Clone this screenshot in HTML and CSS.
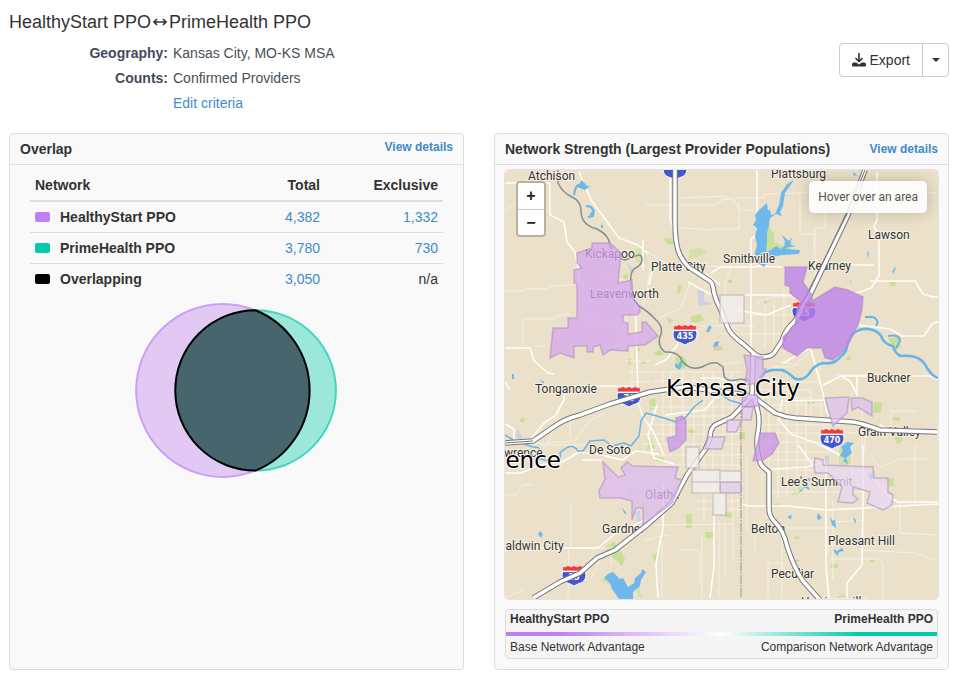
FILE: index.html
```html
<!DOCTYPE html>
<html lang="en">
<head>
<meta charset="utf-8">
<title>Network comparison</title>
<link rel="stylesheet" href="styles.css">
</head>
<body>
<main class="page">
  <header class="top">
    <div class="summary">
      <h1 class="title">HealthyStart PPO<svg class="arrow" viewBox="0 0 16 10" role="img" aria-label="compared with"><path d="M3 5h10M5 2L2 5l3 3M11 2l3 3-3 3" fill="none" stroke="#333" stroke-width="1.700"/></svg>PrimeHealth PPO</h1>
      <dl class="criteria">
        <dt>Geography:</dt><dd>Kansas City, MO-KS MSA</dd>
        <dt>Counts:</dt><dd>Confirmed Providers</dd>
        <dd class="edit"><a href="#">Edit criteria</a></dd>
      </dl>
    </div>
    <div class="export">
      <button type="button" class="btn btn-main"><svg class="dl" viewBox="0 0 14 14" aria-hidden="true"><path d="M7 0v8M3.500 5L7 8.500 10.500 5" fill="none" stroke="#333" stroke-width="1.600"/><path d="M1.500 9.500h2.700L7 11.500 9.800 9.500h2.700L14 10.800v1.700q0 1-1 1H1q-1 0-1-1v-1.700z" fill="#333"/></svg>Export</button>
      <button type="button" class="btn btn-caret" aria-label="More export options"><span class="caret"></span></button>
    </div>
  </header>

  <div class="cards">
    <section class="card">
      <div class="card-head"><h2>Overlap</h2><a class="details details-high" href="#">View details</a></div>
      <div class="overlap-body">
        <table class="networks">
          <thead><tr><th>Network</th><th class="num">Total</th><th class="num excl">Exclusive</th></tr></thead>
          <tbody>
            <tr><th><span class="swatch purple"></span>HealthyStart PPO</th><td class="num"><a href="#">4,382</a></td><td class="num"><a href="#">1,332</a></td></tr>
            <tr><th><span class="swatch teal"></span>PrimeHealth PPO</th><td class="num"><a href="#">3,780</a></td><td class="num"><a href="#">730</a></td></tr>
            <tr><th><span class="swatch black"></span>Overlapping</th><td class="num"><a href="#">3,050</a></td><td class="num">n/a</td></tr>
          </tbody>
        </table>
        <svg class="venn" viewBox="135 302 204 177" role="img" aria-label="Network overlap">
          <circle cx="222.700" cy="390.400" r="86.500" fill="#e2c9f4" stroke="#cc9ff3" stroke-width="2"/>
          <circle cx="255.700" cy="390.400" r="80.200" fill="#9be8da" stroke="#45d6bf" stroke-width="2"/>
          <path d="M255.500 310.200A80.200 80.200 0 0 0 255.500 470.600A86.500 86.500 0 0 0 255.500 310.200Z" fill="#47656c" stroke="#000" stroke-width="2"/>
        </svg>
      </div>
    </section>

    <section class="card">
      <div class="card-head"><h2>Network Strength (Largest Provider Populations)</h2><a class="details" href="#">View details</a></div>
      <div class="map-body">
        <div class="map">
          <svg class="map-art" viewBox="505 170 433 429" role="img" aria-label="Map of the Kansas City area">
            <defs>
              <g id="shield">
                <path d="M-11.500-3.500Q-13.500 4-8 7.500Q-3 9 0 11Q3 9 8 7.500Q13.500 4 11.500-3.500Z" fill="#4257cb" stroke="#fff" stroke-width="1"/>
                <path d="M-11-9l2 1 3-1.500 3 1.500 3-1.500 3 1.500 3-1.500 3 1.500 2-1 .5 5H-11.500z" fill="#ef3b3b" stroke="#fff" stroke-width=".6"/>
                <path d="M-12-3.500H12" stroke="#fff" stroke-width="1.200"/>
              </g>
            </defs>
            <rect x="505" y="170" width="433" height="429" fill="#ebe1ca"/>

            <g fill="#c6df94">
              <path d="M761 230l8-4 5 8v8l9 4 3-5 7 2-3 7-14 6-8 1-8-6z" opacity=".9"/>
              <path d="M636 249l10-2v12l-8 4-5-7zM690 250l10-3 8 5-10 5-10 3z" opacity=".6"/>
              <path d="M692 316l8-2 4 6-8 3-6-2zM675 358l8-2 4 6-2 7-8-3zM874 402l8 1-1 9-8 1zM606 546l8-4 6 8 5 8-3 8-6-6-9-6zM652 555l5-2 2 5-5 3z"/>
              <path d="M628 359h5v6h-5zM641 360h5v4h-5zM637 348h3v3h-3zM686 514h6v14h-6zM705 532h8v6h-8zM831 564h7v4h-7zM885 478h9v8l-5 1zM649 400l6-2 1 8-6 5zM739 432h6v7h-6zM894 437l8-1 1 5-6 3zM893 417h7v4h-7z" opacity=".9"/>
              <path d="M613 572l-5 5-8 3 10 5zM645 570l-8 12 1 14 4 2-4-13zM839 445l10 2 3 14-11 12-4-14zM805 480l-9 8-5 8 7-2zM836 598l5-4 6 2 3 2z" opacity=".7"/>
              <path d="M889 282l6-1 1 4-5 1zM520 419l5-1-1 4h-4zM807 400l6-1 2 4-7 2zM846 358l4-2 1 4-4 1zM791 386l8-2v4l-7 1zM654 352l7-2 3 4-6 2zM678 284l4 3-3 7-2-1zM664 238l9 1 3 6-9-1zM623 275l5-1v5h-4zM719 394l8-1-2 5-6 1zM648 440l7 3-1 5-7 2zM688 430l7-1 1 5-6 2zM774 504l5-1-1 3h-4zM794 537l5-1v3h-4zM870 560l5-1v3h-5zM725 512l8 1-2 5-6-1zM656 457l8 1-1 4-7-1zM888 338l11-1 2 10-6 4z"/>
            </g>
            <g fill="#d9cdab"><path d="M713 345l8 1 2 4-9 1zM667 318l7 2-5 3zM728 280h4v3h-4zM795 560h4v2h-4zM764 300l4 2-4 3z"/></g>
            <g fill="#ccd2e4"><path d="M697 291l7-2v12l9 3-14 2zM635 512l5-1 1 12-3 3zM626 262l8 8 1 4-4-1zM515 436l3-7 4 8-2 4zM849 280l3 1-1 6zM825 455l4 1v7l-4 1zM628 488l6 1-1 5-5-1z"/></g>

            <g class="roads minor">
              <path d="M505 291h18l3-2h21l3-3 24-1M523 346v-27h31l2-3 15-2M505 210l17-10M598 274l30 7M615 292l3 55M535 346l10 0M671 205h45l8-7h41v-4l34-1h137M671 227l40 3 6-1 22 0v-27M682 198l42-2M721 200l12-1 7 11h15M645 205h26M684 267l48-1M732 266l-7 15v22M756 303l15-6h22l14 8M825 192v36h-10v52M800 190v44l14 0v18M831 304v25M846 305l-18 29M645 250l20 13 23 3M650 266l-3 25-4 15M690 282l-9 26-22 10M560 408l-5 20-10 20M505 495h12l5-10h10M570 418v20M605 413l-16 8-14 20-44 3M540 445h45M571 505v43M569 550l-1 48M571 548h50M662 540v58M702 535v63M738 448v70M747 455v75M755 520v30M733 506v55M725 523v55M719 520v75M838 440v30M852 445v40M862 404v50M891 414v22M938 410v30M916 411h-26M821 402v20M811 390v35"/>
              <path d="M833 500v80M870 455l10 12 20-8h30M830 559h50l3 6v37M776 528h58M782 533v45M766 470h55M771 492h95M900 503v30l37 2M860 550l55 3 22 8M828 543v12M915 445v55M782 598v-35M782 563h-14v35M865 520l-30 2M680 550h20v35M654 525l80-1M645 540l24-5M611 565v-20M592 577l10-20M505 550h30M505 598l18-8"/>
              <path d="M651 372h90M653 381h88M650 391h30M650 407h92M656 416h86M650 425h90M640 434h100M642 444h98M650 455h90M655 465h85M695 475h45M695 484h50M697 493h50M697 501h50M697 509h46M663 372v70M671 372v85M683 372v90M694 372v92M704 372v150M713 372v137M723 372v137M732 372v140M762 398v110M769 398v70M778 398v100M787 398v100M797 398v95M806 398v95M760 390h50M760 398h52M760 405h65M760 425h80M760 433h75M760 442h75M762 452h70M760 460h60M760 382h60M774 300v48M784 290v65M700 326h55M720 334h75M765 303v45M750 315h40M715 365l25-3M710 320l30 10"/>
              <path d="M592 290v55M605 285l20 25 5 31M583 327h46M585 315l20-5M632 340v50M625 361h25M627 372h23M628 382h22M810 352l-18 15h-20M820 360l-1 25M834 375h35M855 390l-12 12-15 10M821 425l17 8h27M865 427v26M780 362l20 3"/>
            </g>
            <g class="roads">
              <path d="M505 183h45M550 183v32l14 7 3 20 8 10 4 20-1 13M579 172l12 28 28 38 19 7 10 9M505 348h25l4 13 14 12 6 1M505 382l5 8M565 386l-1 14-9 16-10 6-15 18M564 386h70M635 295l2 65 1 42 5 15 10 14 11 24M653 267l-4 18M505 424l9 5v15M757 170v64l-6 5v145M670 170v50l6 12M643 240v30M688 282l26 14M720 285l-15-12M711 273l9-6h38M757 266l25 1M744 295h50M877 172v48l-3 6 5 10v40l-8 12-20 7-8 5M820 264h18l22 1h14M870 281l45 0 8 13 10 3h8M736 310l30 5 25-10"/>
              <path d="M858 325l32 4 12 7h22l8-12 7-3M811 350l12 43 4 20 9 8M783 363l29-16M823 385l18-9h90l7 4M841 376l9 5 8 15M857 376v20M825 400l-40 1M880 425l20 10M505 473h16l19-8 22-3 17-10 19 2 24 6 14-9 23 3M505 548h93l17-14 32-15M602 460l-20 0M660 540l-4 25 2 33M714 515v52l-4 31M663 484v44l-3 15M657 405l-9 30 6 23 20 6M655 365l12-6 11-15M700 378l18 0 18 5M735 395l-20 3-10 12-40 5M782 400l-3 20 12 14 25 9 24 12M825 462l-18 5-36 2M741 504l7 2h40l38 4 112-6M826 464v103l3 31M863 445v60l-1 60-15 18v15M874 478l14 18 10 6h40M798 445l15 20"/>
            </g>

            <g fill="none" stroke="#67b4e8" stroke-width="2" stroke-linejoin="round">
              <path stroke-width="2.600" d="M760 378q2-6 12-8h10q6 2 12 8 8 4 15-4 5-9 14-11 12 2 18-7 6-4 6-10 3-10 8-14 8-5 18-2 8 3 10 10 4 5 10 6 2 8 8 10 20-2 26 12 6 9 11 10"/>
              <path stroke-width="1.500" d="M505 435l10 6 18 6q9 0 7 5l-5 6 15 3q12 3 10-8 12-12 18-2l5 0 7-10 14-1 8 6 12-3 7 3 8-10 2-15 5-8 18 5 12 4 10-5 8-10 9-7M742 404l-13-4-8-6"/>
              <path d="M574 195q2-14 9-9m-9 9M586 206q9 0 7 10l-5 1M865 317h8q7 3 3 9M888 336q12-2 12 5l-4 7"/>
            </g>
            <g fill="#6eb8ed">
              <path d="M767 203l1 8 2-2 1 6 4-1 4-9 2-12 6-9 7-4-9 13-2 13-3 6 2 4-6-2-6 4-1 7-2 8v10l-1 9 5-2 5-4 5 3 5-5-4-9 7 6 3-4-2 9-5 3 15 1-1 4-17 1-8 2-7 6-3 4-9-6-6 3-1-4 6-2 1-5 2-8-2-9 2-8-4-3 3-5-1-5 3-4z"/>
              <path d="M608 574l5-2 7 7 3-1 5 9 6-4 1-5 6-5 1-4 4 3-5 8-1 6-7 6v7h-14l-7-10-2-6-6-5zM576 188l6-8 5 6 3 0-5 4-8-3-3 8zM590 205l5 5-2 5-4 1 3-5zM709 325l3 2-3 5-3 0zM715 342l4-1-1 5-5 1zM675 363l3 2 4-6 0 6-2 5-5-3zM847 442l-6 5 2 3-3 6 5 2-2 3 5 3-2-6 6-5-2-6 4-4z"/>
              <path d="M809 478l-6 4 1 4-6 7 4-2 1-4 7 3-4-7 5-3zM830 517l3 4 2-2 1 9-4-3zM818 513l4 5-4 2-1-3zM622 508l3 3 2 4-3-2zM538 534l2-3 3 3-2 4zM868 250l1 4-2 4zM868 472l4 1 1-3 1 8-4 2zM833 549l4 2 5-3 2 3-5 1-1 4-3-3zM540 379l4 3 2-3-3 5zM512 374h2v5h-2zM601 225h2v3h-2zM784 242l7 3 5 2-10 0zM895 267h1l-2 6-2-1zM854 172l3 4-4-1zM853 517l3 3-1 4zM788 516l4-1-1 4-3-1z"/>
            </g>
            <path d="M558 170v13q4 9 14 14 9 4 9 14 0 14 16 18 12 6 13 16 3 11 15 15l9-3q8-5 8 3 0 5-8 9-4 3-3 14-1 14 8 23 10 6 17 14 7 6 5 14-5 11 4 18 14-1 17 9 8 10 20 6 9-5 15-4l6 4 1 9q2 6 12 4 6-2 14 1" fill="none" stroke="#858d8f" stroke-width="1.500"/>
            <path d="M741 406v192" stroke="#9b968c" stroke-width="1" stroke-dasharray="9 1 2 1"/>

            <use href="#shield" x="675" y="169"/><use href="#shield" x="629" y="396"/><use href="#shield" x="574" y="575"/><use href="#shield" x="804" y="311"/>
            <g class="shield-text"><text x="629" y="401">70</text><text x="574" y="580">35</text><text x="804" y="316">35</text></g>

            <g class="place">
              <text x="528" y="180">Atchison</text><text x="771" y="178">Plattsburg</text><text x="868" y="239">Lawson</text>
              <text x="585" y="258">Kickapoo</text><text x="651" y="271">Platte City</text><text x="723" y="263">Smithville</text>
              <text x="808" y="270">Kearney</text><text x="590" y="298">Leavenworth</text><text x="535" y="393">Tonganoxie</text>
              <text x="867" y="382">Buckner</text><text x="858" y="436">Grain Valley</text><text x="589" y="454">De Soto</text>
              <text x="491" y="457">Lawrence</text><text x="781" y="486">Lee's Summit</text><text x="645" y="499">Olathe</text>
              <text x="602" y="533">Gardner</text><text x="751" y="533">Belton</text><text x="828" y="545">Pleasant Hill</text>
              <text x="498" y="550">Baldwin City</text><text x="771" y="578">Peculiar</text><text x="801" y="606">Harrisonville</text>
            </g>

            <g fill="none" stroke-linejoin="round">
              <g stroke="#777" stroke-width="5.500">
                <path id="i29" d="M675 170v52q0 23 5 33 4 8 10 13l20 13q3 2 4 12 2 8 6 15l8 20q2 6 14 15l14 12 5 2q10 0 13-4l8-12q2-8 8-15 9-8 13-21l7-10 38-80 17-45"/>
                <path id="i70" d="M505 443l28-2 19-13q12-9 28-13l30-11 40-12 35-5 40 5q20 2 30 6l20 15q10 4 20 5l58 4q8 1 27 8l57 2"/>
                <path id="i35" d="M753 354l-1 42-20 21-17 8q-5 4-5 13l-5 12-18 25-15 28-25 22-32 25-18 8-17 15-20 9-27 16"/>
                <path id="i49" d="M754 396l4 16q2 8 0 20-3 14 2 30 1 4 9 10v36q0 8 5 13 10 10 13 25 7 22 16 35 9 10 17 19"/>
              </g>
              <g stroke="#fff" stroke-width="3.500"><use href="#i29"/><use href="#i70"/><use href="#i35"/><use href="#i49"/></g>
              <path d="M797 312l13-24 38-76 17-42M505 443l28-2" stroke="#777" stroke-width="1"/>
            </g>
            <use href="#shield" x="685" y="334"/><use href="#shield" x="832" y="438"/>
            <g class="shield-text"><text x="685" y="339">435</text><text x="832" y="443">470</text></g>

            <g stroke="#a98abf" stroke-opacity=".55" stroke-width="1.500" fill-opacity=".75">
              <path fill="#d5a5ee" d="M577 318v-35h-3v-13l8-2-5-5v-10l15-5v-5h18l11 10-3 30 14-3 1 18 7 10v4l-3 3h-14v7l5 1v11l14-2v-10h4l12 14-13 9-17 1v5l-18-1-7 5-3-10-7 2v5h-6v-6h-13v12l-14-5-10 5 3-30h15v-10z"/>
              <path fill="#bd82e8" fill-opacity=".8" d="M785 267h22l-4 15 9 13 0 6 23-14 13 3 15 7-1 13-4 15-13 25-12 10-8-2-3-10h-15l-10 8-14-8v-11l12-11 2-18 4-6-11-9v-6l-5-2z"/>
              <path fill="#dcbaf0" d="M603 462l15 15 7-2-4-7 6-6 6 4 45 1-3 11 7 2-10 23-29 22v-17h-7l-4 12v-19l-12-3h-20l-1-7 6-12z"/>
              <path fill="#d6b0ee" d="M744 355l19 2v12l3 0-6 14-15 2 2-15zM742 395h15l2 11-17 1z"/>
              <path fill="#e4ccef" d="M742 407h11l-2 13h-9zM727 420h15l-6 12h-9zM708 437h17l-3 12h-17zM720 482h21v11h-21z"/>
              <path fill="#c791ea" d="M676 418l6-2 4 4v20l-8 8-8 4-3-14 9-2zM760 433h15l4 10-7 11-9 6-10 1 4-16z"/>
              <path fill="#dcbff0" d="M825 398l24-1-2 16-14 13zM851 398h11l10 4v14l-14-9-6 3z"/>
              <path fill="#ead7f1" d="M814 466l1-8 8 2v5l50 2 1 11h14v14l5 3-1 10-9 5-16-7 3-11-17-5v8l5 4-5 4-15-1 4-15-14-14-13 0z"/>
              <path fill="#f3edf0" stroke="#b3aaa5" d="M720 295h24v28h-24zM692 470h28v12h-28zM692 482h28v11h-28zM720 471h21v11h-21zM713 493h13v22h-13zM686 447h13v21h-13z"/>
            </g>
            <g class="city"><text x="666" y="396">Kansas City</text><text x="561" y="468" text-anchor="end">ence</text></g>
          </svg>
          <div class="zoomer"><button type="button" aria-label="Zoom in">+</button><button type="button" aria-label="Zoom out">−</button></div>
          <div class="hover-info">Hover over an area</div>
        </div>
        <div class="legend">
          <div class="legend-row names"><span>HealthyStart PPO</span><span>PrimeHealth PPO</span></div>
          <div class="scale"></div>
          <div class="legend-row"><span>Base Network Advantage</span><span>Comparison Network Advantage</span></div>
        </div>
      </div>
    </section>
  </div>
</main>
</body>
</html>
```
FILE: styles.css
```css
* { box-sizing: border-box; }
body { margin: 0; background: #fff; color: #333; font: 14px/20px "Liberation Sans", Arial, sans-serif; }
a { color: #428bca; text-decoration: none; }
h1, h2, dl, dd { margin: 0; }
.page { padding: 10px 6px 8px 9px; }
.top { display: flex; justify-content: space-between; align-items: center; margin-bottom: 17px; }
.title { font-size: 18px; line-height: 25px; font-weight: 400; margin-bottom: 6px; }
.arrow { width: 16px; height: 10px; margin: 0 1px; vertical-align: 1px; }
.criteria { display: grid; grid-template-columns: 159px auto; column-gap: 5px; line-height: 25px; color: #495057; }
.criteria dt { font-weight: 700; text-align: right; color: #424b5c; }
.edit { grid-column: 2; }
.export { display: flex; margin-top: -6px; }
.btn { height: 34px; background: #fff; border: 1px solid #ccc; font: inherit; color: #333; display: flex; align-items: center; justify-content: center; gap: 4px; padding: 0 12px; }
.btn-main { border-radius: 4px 0 0 4px; }
.btn-caret { border-radius: 0 4px 4px 0; margin-left: -1px; width: 27px; padding: 0; }
.dl { width: 14px; height: 14px; }
.caret { border: 4px solid transparent; border-top-color: #333; border-bottom: 0; }
.cards { display: grid; grid-template-columns: 1fr 1fr; gap: 30px; }
.card { border: 1px solid #ddd; border-radius: 4px; background: #f9f9f9; min-width: 0; }
.card-head { display: flex; justify-content: space-between; align-items: center; height: 31px; padding: 0 10px; border-bottom: 1px solid #ddd; }
.card-head h2 { font-size: 14px; font-weight: 700; white-space: nowrap; }
.details { font-size: 12px; font-weight: 700; line-height: 16px; white-space: nowrap; }
.details-high { align-self: flex-start; margin-top: 5px; }
.overlap-body { padding: 5px 20px; display: flex; flex-direction: column; align-items: center; }
.networks { width: 100%; border-collapse: collapse; }
.networks th, .networks td { height: 31px; padding: 5px; line-height: 20px; text-align: left; border-top: 1px solid #ddd; }
.networks thead th { border-top: 0; border-bottom: 2px solid #ddd; }
.networks .num { text-align: right; }
.excl { width: 118px; }
.swatch { display: inline-block; width: 15px; height: 10px; border-radius: 2px; margin-right: 10px; }
.purple { background: #be80f2; }
.teal { background: #04c9ab; }
.black { background: #000; }
.venn { width: 204px; height: 177px; margin-top: 7px; }
.map-body { padding: 5px 10px 10px; }
.map { position: relative; border-radius: 4px; overflow: hidden; box-shadow: 0 0 0 1px #e2e2e2; }
.map-art { display: block; width: 100%; height: auto; }
.roads { fill: none; stroke: #fffdf7; stroke-width: 1.6; stroke-linejoin: round; }
.minor { stroke: #f6f0e2; stroke-width: 1; }
.place { font: 12px Roboto, sans-serif; fill: #333; stroke: #f6f1e4; stroke-width: 2px; paint-order: stroke; }
.city { font: 23px "DejaVu Sans", sans-serif; fill: #000; stroke: #fff; stroke-width: 2px; paint-order: stroke; }
.shield-text { font: bold 8px "DejaVu Sans", sans-serif; fill: #fff; text-anchor: middle; }
.zoomer { position: absolute; top: 11px; left: 11px; border: 2px solid #b9b09e; border-radius: 4px; overflow: hidden; }
.zoomer button { display: block; width: 26px; height: 26px; padding: 0; border: 0; background: #fff; color: #222; font: bold 16px/26px "Liberation Sans", Arial, sans-serif; }
.zoomer button + button { border-top: 1px solid #ccc; }
.hover-info { position: absolute; top: 11px; right: 11px; padding: 6px 9px; border-radius: 5px; background: rgba(255, 255, 255, .85); box-shadow: 0 0 15px rgba(0, 0, 0, .2); font: 12px/20px Roboto, sans-serif; color: #555; }
.legend { margin-top: 10px; border: 1px solid #ddd; border-radius: 4px; background: #f5f5f5; font-size: 12px; }
.legend-row { display: flex; justify-content: space-between; gap: 8px; padding: 1px 4px; line-height: 20px; }
.names { font-weight: 700; padding: 0 4px 3px; line-height: 19px; }
.scale { height: 4px; background: linear-gradient(90deg, #b980ea 0%, #be80f2 12%, #fff 50%, #04c9ab 82%, #04c9ab 100%); }
```
